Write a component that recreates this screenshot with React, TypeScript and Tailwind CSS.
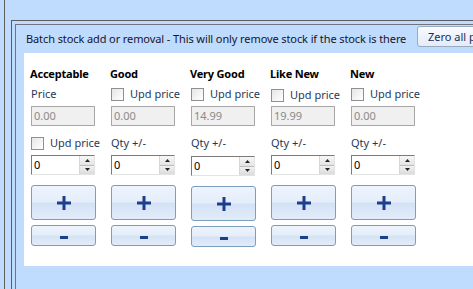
import React from "react";

type Col = {
  title: string;
  price: string;
  priceCheck: boolean; // true = "Upd price" checkbox above price box, false = "Price" label
  shift?: boolean;
};

const cols: Col[] = [
  { title: "Acceptable", price: "0.00", priceCheck: false },
  { title: "Good", price: "0.00", priceCheck: true },
  { title: "Very Good", price: "14.99", priceCheck: true, shift: true },
  { title: "Like New", price: "19.99", priceCheck: true },
  { title: "New", price: "0.00", priceCheck: true },
];

function CheckBox({ label }: { label: string }) {
  return (
    <div className="flex items-center gap-[6px] h-[16px]">
      <span className="w-[13px] h-[13px] border border-[#8e8f8f] bg-gradient-to-br from-[#e6e6e6] to-white shrink-0" />
      <span className="text-[#1e395b]">{label}</span>
    </div>
  );
}

function Spinner() {
  return (
    <div className="flex w-[64px] h-[20px] border-t border-l border-[#7a7a7a] border-r border-b border-r-[#e3e3e3] border-b-[#e3e3e3] bg-white">
      <div className="flex-1 pl-[2px] leading-[18px] text-black">0</div>
      <div className="w-[15px] flex flex-col border-l border-[#d6d6d6]">
        <div className="flex-1 flex items-center justify-center bg-gradient-to-b from-[#f7f7f7] to-[#e4e4e4] border-b border-[#bdbdbd]">
          <svg width="5" height="3" viewBox="0 0 5 3"><path d="M2.5 0L5 3H0z" fill="#222" /></svg>
        </div>
        <div className="flex-1 flex items-center justify-center bg-gradient-to-b from-[#f0f0f0] to-[#dcdcdc]">
          <svg width="5" height="3" viewBox="0 0 5 3"><path d="M0 0h5L2.5 3z" fill="#222" /></svg>
        </div>
      </div>
    </div>
  );
}

function BigButton({ sign, tall }: { sign: "+" | "-"; tall: boolean }) {
  return (
    <div
      className={
        "w-[65px] rounded-[3px] border border-[#7b9ebd] bg-[linear-gradient(to_bottom,#eef4fd_0%,#e4edfa_48%,#d4e2f6_52%,#e2ecf9_100%)] flex items-center justify-center " +
        (tall ? "h-[35px]" : "h-[21px]")
      }
    >
      {sign === "+" ? (
        <svg width="14" height="14" viewBox="0 0 14 14">
          <path d="M5.5 0h3v5.5H14v3H8.5V14h-3V8.5H0v-3h5.5z" fill="#1c3f8c" />
        </svg>
      ) : (
        <svg width="8" height="3" viewBox="0 0 8 3" className="mt-[4px]">
          <rect width="8" height="3" fill="#1c3f8c" />
        </svg>
      )}
    </div>
  );
}

export default function App() {
  return (
    <div className="w-[473px] h-[289px] overflow-hidden bg-[#bfdbfe] pl-[4px] font-['Noto_Sans',sans-serif] text-[11px]">
      <div className="h-full border-l border-[#5d5d5d] pl-[6px] pt-[20px]">
        <div className="h-full border-l border-t border-[#5d5d5d] pl-[3px] pt-[3px]">
          <div className="h-full border-l border-t border-[#6e7480]">
            {/* header strip */}
            <div className="flex h-[28px] pl-[10px]">
              <div className="w-[391px] shrink-0 pt-[6px] text-[#15152b] whitespace-nowrap tracking-[-0.1px]">
                Batch stock add or removal - This will only remove stock if the stock is there
              </div>
              <div className="mt-[1px] h-[21px] pl-[10px] pr-[8px] rounded-[3px] border border-[#9aaac4] bg-gradient-to-b from-[#f8fbff] to-[#e4ecf7] text-[#1c2a5c] leading-[19px] whitespace-nowrap shrink-0">
                Zero all p
              </div>
            </div>
            {/* white panel */}
            <div className="ml-[8px] h-[213px] bg-white pl-[6px] pt-[13px] flex">
              {cols.map((c) => (
                <div key={c.title} className="w-[80px] flex flex-col">
                  <div className="h-[17px] font-bold text-black tracking-[-0.2px]">{c.title}</div>
                  <div className="pl-[1px] mt-[3px] h-[16px]">
                    {c.priceCheck ? (
                      <div className={c.title === "Like New" ? "mt-[1px]" : ""}>
                        <CheckBox label="Upd price" />
                      </div>
                    ) : (
                      <div className="text-[#1e395b] leading-[16px]">Price</div>
                    )}
                  </div>
                  <div className="pl-[1px] mt-[4px]">
                    <div className="w-[64px] h-[20px] border border-[#a8a8a8] bg-[#f0f0f0] text-[#8a8a8a] pl-[2px] leading-[18px]">
                      {c.price}
                    </div>
                  </div>
                  <div className="pl-[1px] mt-[9px] h-[16px]">
                    {c.priceCheck ? (
                      <div className="text-[#1e395b] leading-[16px]">Qty +/-</div>
                    ) : (
                      <CheckBox label="Upd price" />
                    )}
                  </div>
                  <div className={"pl-[1px] " + (c.shift ? "mt-[5px]" : "mt-[4px]")}>
                    <Spinner />
                  </div>
                  <div className="pl-[1px] mt-[10px]">
                    <BigButton sign="+" tall />
                  </div>
                  <div className="pl-[1px] mt-[5px]">
                    <BigButton sign="-" tall={false} />
                  </div>
                </div>
              ))}
            </div>
          </div>
        </div>
      </div>
    </div>
  );
}
